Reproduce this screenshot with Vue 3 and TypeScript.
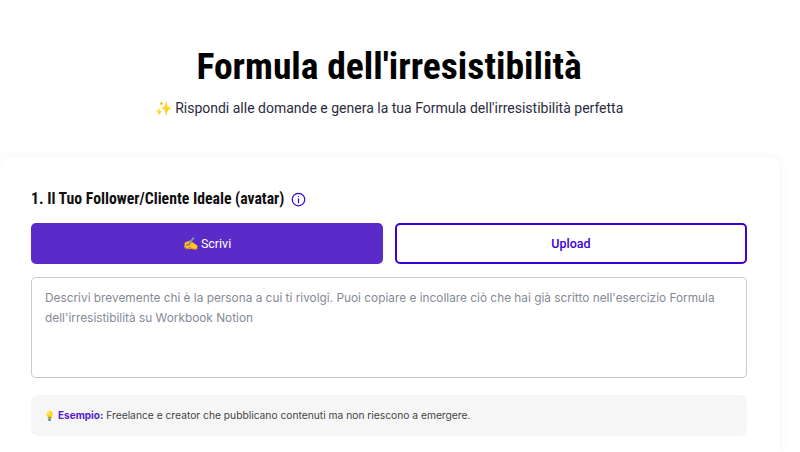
<script setup lang="ts">
const title = "Formula dell'irresistibilità";
</script>

<template>
  <div class="page">
    <header class="head">
      <h1>{{ title }}</h1>
      <p class="sub"><span>✨</span> Rispondi alle domande e genera la tua Formula dell'irresistibilità perfetta</p>
    </header>
    <main class="card">
      <div class="label">
        <span>1. Il Tuo Follower/Cliente Ideale (avatar)</span>
        <svg width="15" height="15" viewBox="0 0 24 24" fill="none" stroke="#3b00d6" stroke-width="2" stroke-linecap="round">
          <circle cx="12" cy="12" r="10" />
          <path d="M12 11v6M12 7.2v.1" />
        </svg>
      </div>
      <div class="tabs">
        <button class="tab active"><span>✍️</span> Scrivi</button>
        <button class="tab">Upload</button>
      </div>
      <div class="area">Descrivi brevemente chi è la persona a cui ti rivolgi. Puoi copiare e incollare ciò che hai già scritto nell'esercizio Formula dell'irresistibilità su Workbook Notion</div>
      <div class="example"><span class="bulb">💡</span> <b>Esempio:</b> <span>Freelance e creator che pubblicano contenuti ma non riescono a emergere.</span></div>
    </main>
  </div>
</template>

<style>
html, body { margin: 0; background: #fff; overflow: hidden; }
</style>

<style scoped>
.page { width: 800px; height: 452px; overflow: hidden; box-sizing: border-box; font-family: Roboto, sans-serif; }
.head { width: 778px; text-align: center; padding-top: 44px; height: 157px; box-sizing: border-box; }
h1 { margin: 0; font-size: 37.6px; line-height: 44px; font-weight: 700; color: #000; font-stretch: 75%; }
.sub { margin: 10px 0 0; font-size: 14px; line-height: 20px; color: #2b2b3d; }
.card { width: 780px; box-sizing: border-box; padding: 32px 33px 0 31px; height: 295px; border-radius: 10px 10px 0 0; box-shadow: 0 0 8px rgba(90, 80, 200, 0.07); }
.label { display: flex; align-items: center; gap: 7px; font-size: 15.75px; line-height: 20px; font-weight: 700; color: #111; font-stretch: 85%; }
.label svg { margin-top: 1px; }
.tabs { display: grid; grid-template-columns: 1fr 1fr; gap: 12px; margin-top: 14px; }
.tab { height: 41px; border-radius: 5px; border: 2px solid #3b00d6; background: #fff; color: #3b00d6; font: 500 12.5px Roboto, sans-serif; }
.tab.active { background: #5b2bc9; border-color: #5b2bc9; color: #fff; font-weight: 400; word-spacing: -1px; }
.area { margin-top: 13px; height: 101px; box-sizing: border-box; border: 1px solid #ccc; border-bottom-color: #c4c4c4; border-radius: 5px; padding: 10px 13px; font: 11.85px/20px Inter, sans-serif; color: #858a98; }
.example { margin-top: 17px; height: 41px; display: flex; align-items: center; background: #f6f6f6; border-radius: 7px; padding: 0 13px 1px; box-sizing: border-box; font: 10.25px Inter, sans-serif; color: #444; }
.example .bulb { font-size: 9px; width: 14px; }
.example b { color: #5320cc; font-size: 10px; margin-right: 3px; }
</style>
